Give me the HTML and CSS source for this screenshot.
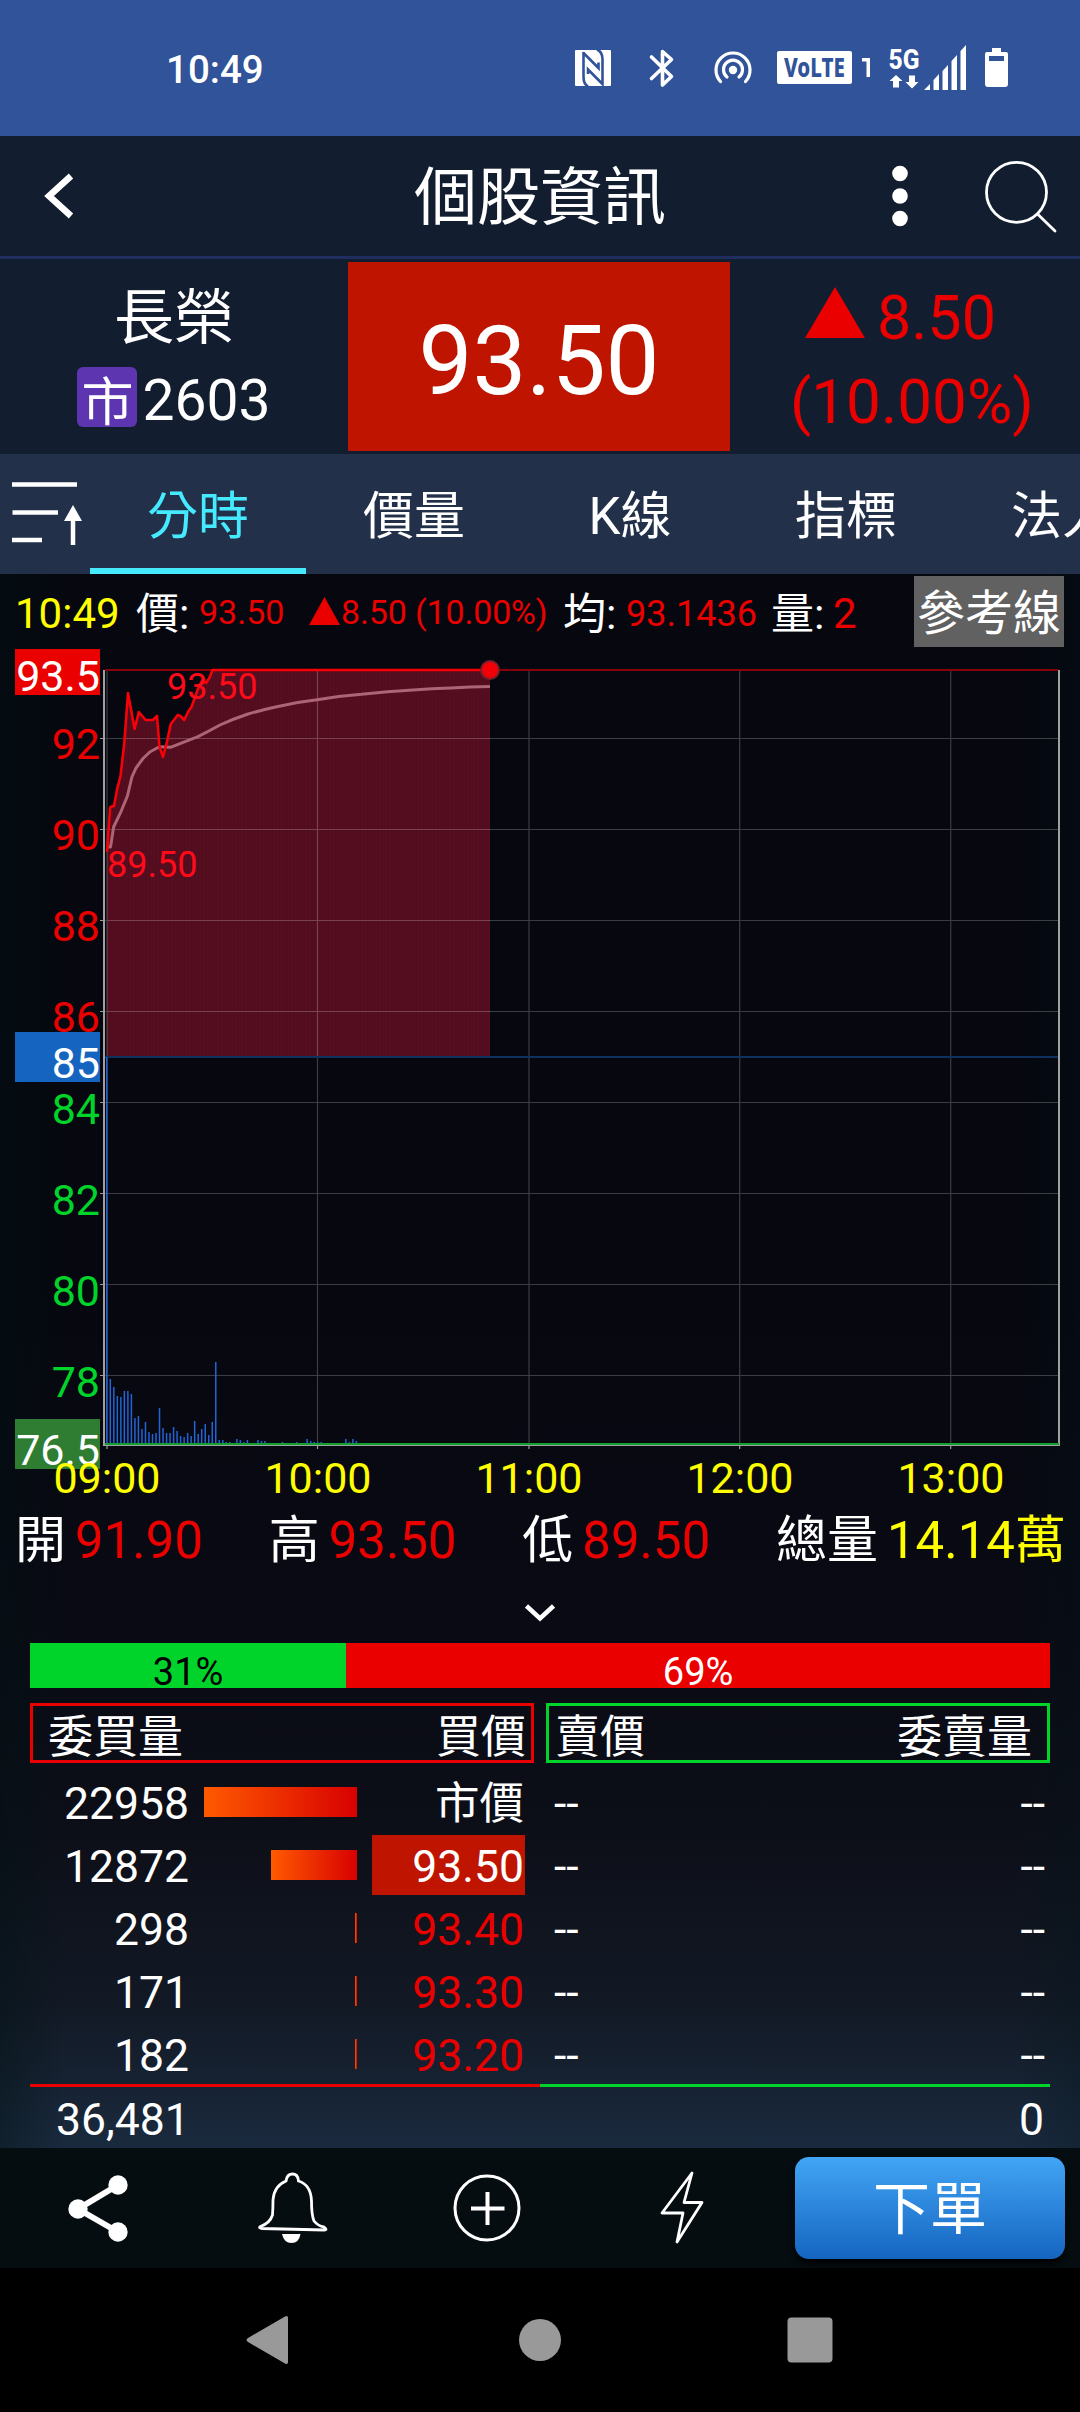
FILE: index.html
```html
<!DOCTYPE html>
<html lang="zh-Hant">
<head>
<meta charset="utf-8">
<title>個股資訊</title>
<link rel="stylesheet" href="styles.css">
</head>
<body>
<div class="statusbar">
  <span class="clock">10:49</span>
  <svg class="status-icons" width="440" height="50" viewBox="570 44 440 50">
    <rect x="575" y="50" width="36" height="36" rx="1" fill="#fff"/>
    <g fill="none" stroke="#305399" stroke-width="2.600">
      <path d="M583.500 52V77Q583.500 84 588 86.500M583 52.500L598.500 68V62.500M597 49.500Q602.500 52 602.500 59V84L588 69.500V74"/>
    </g>
    <path fill="none" stroke="#fff" stroke-width="3.600" stroke-linejoin="round" stroke-linecap="round" d="M651.500 57L671.500 76.500L662.500 85V51.500L671.500 59.500L651.500 78.500"/>
    <circle cx="733" cy="70" r="4.200" fill="#fff"/>
    <path fill="none" stroke="#fff" stroke-width="3.200" stroke-linecap="round" d="M727 77A9.500 9.500 0 1 1 739 77M720.500 81.500A17 17 0 1 1 745.500 81.500"/>
    <rect x="777" y="51" width="75" height="33" rx="2" fill="#fff"/>
    <text class="volte" x="814.500" y="76.500" text-anchor="middle" textLength="61" lengthAdjust="spacingAndGlyphs">VoLTE</text>
    <path fill="#fff" d="M862 58H870V77H866.500V61.500H862Z"/>
    <text class="net" x="888.500" y="69" textLength="31" lengthAdjust="spacingAndGlyphs">5G</text>
    <path fill="#fff" d="M896 75L902.500 81H899V87.500H893V81H889.500ZM912 88.500L918.500 82H915V75.500H909V82H905.500Z"/>
    <path fill="#fff" d="M924 90L930 84V90ZM933.500 80L939 74V90H933.500ZM942.500 71L948 65V90H942.500ZM951.500 61L957 55V90H951.500ZM960.500 51L966 45V90H960.500Z"/>
    <path fill="#fff" fill-rule="evenodd" d="M992 48H1001V52H1006Q1008 52 1008 54V84Q1008 87 1005 87H988Q985 87 985 84V54Q985 52 987 52H992ZM989 56V61H1004V56Z"/>
  </svg>
</div>

<header class="header">
  <svg class="back" width="32" height="48" viewBox="43 171 32 48"><path d="M71 175L49 195L71 215" fill="none" stroke="#fff" stroke-width="6.500"/></svg>
  <h1 class="title">個股資訊</h1>
  <svg class="header-actions" width="172" height="80" viewBox="888 156 172 80">
    <g fill="#fff"><circle cx="900" cy="173.500" r="7.800"/><circle cx="900" cy="196" r="7.800"/><circle cx="900" cy="218.500" r="7.800"/></g>
    <g fill="none" stroke="#fff" stroke-width="2.800" stroke-linecap="round"><circle cx="1016.500" cy="192.300" r="30"/><path d="M1038 214.500L1055 231"/></g>
  </svg>
</header>

<section class="quote">
  <div class="stock">
    <div class="name">長榮</div>
    <div class="code"><span class="badge">市</span><span>2603</span></div>
  </div>
  <div class="price">93.50</div>
  <div class="change">
    <div class="diff"><svg width="60" height="52" viewBox="0 0 60 52"><path fill="#eb0000" d="M30 0L60 51H0Z"/></svg><span>8.50</span></div>
    <div class="pct">(10.00%)</div>
  </div>
</section>

<nav class="tabs">
  <div class="sort"><svg width="72" height="66" viewBox="10 480 72 66"><path d="M12 484.500H77M12.500 512.500H58M12 540H42" stroke="#fff" stroke-width="4.500"/><path d="M73 545V512" stroke="#fff" stroke-width="4.500"/><path d="M73 505L82 521H64Z" fill="#fff"/></svg></div>
  <div class="tab active">分時</div>
  <div class="tab">價量</div>
  <div class="tab">K線</div>
  <div class="tab">指標</div>
  <div class="tab">法人</div>
</nav>

<main class="content">
  <div class="info">
    <span class="t-yellow s42">10:49</span>
    <span>價:</span>
    <span class="t-red s34">93.50</span>
    <span class="t-red s34 move"><svg width="31" height="28" viewBox="0 0 31 28"><path fill="#eb0000" d="M15.500 0L31 28H0Z"/></svg>8.50 (10.00%)</span>
    <span>均:</span>
    <span class="t-red s36">93.1436</span>
    <span>量:</span>
    <span class="t-red s42">2</span>
    <span class="ref">參考線</span>
  </div>

  <svg class="chart" width="1080" height="853" viewBox="0 647 1080 853">
    <defs>
      <pattern id="minute" x="106.800" y="0" width="3.515" height="20" patternUnits="userSpaceOnUse">
        <rect width="3.515" height="20" fill="#560d20"/><rect width="0.800" height="20" fill="#4b0c1c"/>
      </pattern>
    </defs>
    <path fill="url(#minute)" d="M107 1057V852L110.200 807L114 806L117.400 788L120.500 776L124.300 743L128 693L134.600 729L138.800 712L145.700 720H153L157 716L159.400 746L163 757L166.700 743L170.800 724L177.700 715L180.400 716L184.200 720L188 712L191.500 707L198.300 688L202.500 680L206 683L209.400 678L212.500 670H490V1057Z"/>
    <path class="grid" d="M104 738.500H1058M104 829.500H1058M104 920.500H1058M104 1011.500H1058M104 1102.500H1058M104 1193.500H1058M104 1284.500H1058M104 1375.500H1058M107 670V1445M317.500 670V1445M529 670V1445M739.700 670V1445M950.700 670V1445"/>
    <path d="M105 1057H1058" stroke="#0f315f" stroke-width="2"/>
    <path d="M105 670H1058" stroke="#85000a" stroke-width="2"/>
    <path d="M100 738.500H104M100 829.500H104M100 920.500H104M100 1011.500H104M100 1102.500H104M100 1193.500H104M100 1284.500H104M100 1375.500H104M107 1445V1449M317.500 1445V1449M529 1445V1449M739.700 1445V1449M950.700 1445V1449" stroke="#9c9c9c" stroke-width="1.200"/>
    <g transform="translate(106.800 0) scale(3.515 1)">
      <path class="volume" d="M0 1444V1057M1 1444V1379M2 1444V1387M3 1444V1396M4 1444V1397M5 1444V1391M6 1444V1391M7 1444V1394M8 1444V1418M9 1444V1416M10 1444V1429M11 1444V1422M12 1444V1432M13 1444V1434M14 1444V1433M15 1444V1408M16 1444V1428M17 1444V1433M18 1444V1433M19 1444V1427M20 1444V1431M21 1444V1436M22 1444V1437M23 1444V1433M24 1444V1436M25 1444V1421M26 1444V1434M27 1444V1429M28 1444V1424M29 1444V1435M30 1444V1422M31 1444V1362M32 1444V1440M33 1444V1440M34 1444V1442M35 1444V1442M37 1444V1439M38 1444V1440M39 1444V1442M40 1444V1440M43 1444V1440M44 1444V1441M45 1444V1441M50 1444V1442M54 1444V1442M57 1444V1439M58 1444V1441M59 1444V1442M60 1444V1442M61 1444V1442M68 1444V1439M69 1444V1442M70 1444V1439M71 1444V1441"/>
    </g>
    <path d="M104 670V1445M1059 670V1446" stroke="#a0a0a0" stroke-width="2"/>
    <path d="M103 1445.500H1060" stroke="#a0a0a0" stroke-width="1"/>
    <path d="M105 1444H1059" stroke="#12a02e" stroke-width="2"/>
    <path fill="none" stroke="#ab6574" stroke-width="3" stroke-linejoin="round" d="M107 847H110.500L113.600 827L120.500 812.700L127.400 796L131.900 777L136 768L143 758.500L149.800 752L159.400 746.700L170.500 747.300L182.500 742.700L198 736.700Q209 731 220 725Q233 719 248 714Q262 710 275.500 707Q296 702 317 699.700Q339 696 361.600 694.300Q388 691.500 413 690Q450 687.500 490 686.500"/>
    <path fill="none" stroke="#f80008" stroke-width="2.600" stroke-linejoin="round" d="M107 852L110.200 807L114 806L117.400 788L120.500 776L124.300 743L128 693L134.600 729L138.800 712L145.700 720H153L157 716L159.400 746L163 757L166.700 743L170.800 724L177.700 715L180.400 716L184.200 720L188 712L191.500 707L198.300 688L202.500 680L206 683L209.400 678L212.500 670H490"/>
    <circle cx="490" cy="670" r="10" fill="#75202a"/><circle cx="490" cy="670" r="8" fill="#f20008"/>
    <g class="point"><text x="167" y="699">93.50</text><text x="107" y="877">89.50</text></g>
    <g class="axis" text-anchor="end">
      <g fill="#eb0000"><text x="100" y="758.700">92</text><text x="100" y="849.700">90</text><text x="100" y="940.700">88</text><text x="100" y="1031.700">86</text></g>
      <g fill="#00d42a"><text x="100" y="1123.700">84</text><text x="100" y="1214.700">82</text><text x="100" y="1305.700">80</text><text x="100" y="1396.700">78</text></g>
      <rect x="15" y="649" width="85" height="46" fill="#eb0000"/>
      <rect x="15" y="1032" width="85" height="50" fill="#1565c0"/>
      <rect x="15" y="1419" width="85" height="50" fill="#2e7d32"/>
      <g fill="#fff"><text x="100" y="691">93.5</text><text x="100" y="1078">85</text><text x="100" y="1465">76.5</text></g>
    </g>
    <g class="axis" fill="#ff0" text-anchor="middle"><text x="107" y="1492.700">09:00</text><text x="318" y="1492.700">10:00</text><text x="529" y="1492.700">11:00</text><text x="740" y="1492.700">12:00</text><text x="951" y="1492.700">13:00</text></g>
  </svg>

  <div class="summary">
    <div><span>開</span><b class="t-red">91.90</b></div>
    <div><span>高</span><b class="t-red">93.50</b></div>
    <div><span>低</span><b class="t-red">89.50</b></div>
    <div><span>總量</span><b class="t-yellow">14.14萬</b></div>
  </div>
  <div class="chevron"><svg width="30" height="20" viewBox="0 0 30 20"><path d="M1.500 3L15 15.500L28.500 3" fill="none" stroke="#fff" stroke-width="4.500"/></svg></div>

  <div class="ratio"><div class="buy" style="width:31%">31%</div><div class="sell" style="width:69%">69%</div></div>

  <div class="book">
    <div class="side bid">
      <div class="head"><span>委買量</span><span>買價</span></div>
      <div class="row"><span class="qty">22958</span><span class="track"><i class="bar" style="width:153px"></i></span><span class="px">市價</span></div>
      <div class="row"><span class="qty">12872</span><span class="track"><i class="bar" style="width:86px"></i></span><span class="px limit">93.50</span></div>
      <div class="row"><span class="qty">298</span><span class="track"><i class="bar" style="width:2px"></i></span><span class="px up">93.40</span></div>
      <div class="row"><span class="qty">171</span><span class="track"><i class="bar" style="width:2px"></i></span><span class="px up">93.30</span></div>
      <div class="row"><span class="qty">182</span><span class="track"><i class="bar" style="width:2px"></i></span><span class="px up">93.20</span></div>
    </div>
    <div class="side ask">
      <div class="head"><span>賣價</span><span>委賣量</span></div>
      <div class="row"><span>--</span><span>--</span></div>
      <div class="row"><span>--</span><span>--</span></div>
      <div class="row"><span>--</span><span>--</span></div>
      <div class="row"><span>--</span><span>--</span></div>
      <div class="row"><span>--</span><span>--</span></div>
    </div>
  </div>
  <div class="total"><span>36,481</span><span>0</span></div>
</main>

<div class="toolbar">
  <div class="tool"><svg width="70" height="76" viewBox="62 2170 70 76"><path d="M117 2185L77 2209L117 2232" fill="none" stroke="#fff" stroke-width="6"/><g fill="#fff"><circle cx="77" cy="2209" r="9.700"/><circle cx="117" cy="2185" r="9.700"/><circle cx="117" cy="2232" r="9.700"/></g></svg></div>
  <div class="tool"><svg width="72" height="76" viewBox="257 2170 72 76"><path d="M292.500 2174Q298 2174 298.500 2181Q311 2185 311.500 2201Q311.500 2215 314 2221Q318 2226 324 2227Q328 2230 324 2230L262 2228.500Q258 2228 260.500 2226.500Q270 2223 272.500 2215Q273 2208 273 2200Q274 2186 286 2181Q287 2174 292.500 2174Z" fill="none" stroke="#fff" stroke-width="2.800"/><path d="M282 2234H300.500Q299 2243 291.500 2243Q284 2243 282 2234Z" fill="#fff"/></svg></div>
  <div class="tool"><svg width="72" height="76" viewBox="452 2170 72 76"><g fill="none" stroke="#fff"><circle cx="487" cy="2208" r="32" stroke-width="3"/><path d="M487.500 2192V2225M471 2208.500H504.500" stroke-width="4"/></g></svg></div>
  <div class="tool"><svg width="72" height="76" viewBox="647 2170 72 76"><path d="M692 2173L662 2213H683L677 2242L702 2202.500H684Z" fill="none" stroke="#fff" stroke-width="2.800" stroke-linejoin="round"/></svg></div>
  <div class="order">下單</div>
</div>

<div class="navbar">
  <svg width="1080" height="144" viewBox="0 0 1080 144" fill="#999"><path d="M285 48.500Q288 47 288 50V94Q288 97 285 95.500L248 74Q245 72 248 70Z"/><circle cx="540" cy="72" r="21"/><rect x="787.500" y="49.500" width="45" height="45" rx="4"/></svg>
</div>
</body>
</html>
```
FILE: styles.css
```css
* { box-sizing: border-box; }
body {
  margin: 0;
  width: 1080px;
  height: 2412px;
  overflow: hidden;
  display: flex;
  flex-direction: column;
  background: #000;
  color: #fff;
  font-family: Roboto, "Noto Sans CJK TC", sans-serif;
}
svg { display: block; flex: none; }

.statusbar { height: 136px; background: #305399; display: flex; padding: 44px 70px 0 166px; justify-content: space-between; }
.clock { font-size: 38.500px; font-weight: 500; line-height: 52px; }
.volte { font: 800 27px "Noto Sans", sans-serif; fill: #305399; }
.net { font: 800 27px Roboto, sans-serif; fill: #fff; }

.header { height: 123px; background: #121d2f; border-bottom: 3px solid #1f2e5e; display: grid; grid-template-columns: 1fr auto 1fr; align-items: center; padding: 0 20px; }
.back { margin-left: 23px; }
.title { margin: 0; font-size: 63px; font-weight: 400; line-height: 80px; padding-top: 3px; }
.header-actions { justify-self: end; }

.quote { height: 195px; background: #121d2f; display: grid; grid-template-columns: 348px 382px 350px; grid-template-rows: 195px; }
.stock { padding-top: 20px; text-align: center; }
.name { font-size: 60px; line-height: 80px; }
.code { display: flex; justify-content: center; gap: 5px; font-size: 57px; line-height: 84px; }
.badge { width: 60px; height: 60px; margin-top: 8px; border-radius: 6px; background: #5e35b1; font-size: 52px; line-height: 74px; }
.price { height: 189px; margin: 3px 0; background: #bf1500; font-size: 96px; text-align: center; line-height: 198px; }
.change { color: #eb0000; font-size: 61px; line-height: 83px; padding-top: 18px; }
.diff { display: flex; align-items: center; gap: 12px; padding-left: 75px; }
.diff svg { margin-top: -11px; }
.pct { padding-left: 60px; font-size: 62px; }

.tabs { height: 120px; background: #22304a; display: flex; overflow: hidden; }
.sort { width: 90px; flex: none; padding: 26px 0 0 10px; }
.tab { width: 216px; flex: none; text-align: center; font-size: 51px; line-height: 125px; border-bottom: 6px solid transparent; }
.active { color: #45eaff; border-color: #45eaff; }

.content {
  height: 1574px;
  background:
    linear-gradient(90deg, rgba(0, 18, 20, .4), rgba(0, 18, 20, 0) 6%, rgba(0, 18, 20, 0) 94%, rgba(0, 22, 26, .25)),
    linear-gradient(#06070f 0, #06070f 45%, #090a13 66%, #0d0f18 80%, #121925 91%, #1a2a3e 100%);
}
.info { height: 73px; display: grid; grid-template-columns: 121px 63px 110px 254px 63px 145px 62px 81px 150px; padding: 2px 0 0 15px; font-size: 43px; white-space: nowrap; }
.info > span { padding-top: 12px; line-height: 52px; height: 64px; }
.info > .s34 { font-size: 34px; padding-top: 10px; }
.info > .s36 { font-size: 36px; }
.info > .s42 { font-size: 42px; }
.move { display: flex; gap: 1px; letter-spacing: -.15px; }
.move svg { margin-top: 11px; }
.info > .ref { width: 150px; height: 71px; background: #616161; font-size: 48px; line-height: 75px; padding: 0; text-align: center; }
.t-yellow { color: #ff0; }
.t-red { color: #eb0000; }

.grid { stroke: #fff; stroke-opacity: .22; stroke-width: 1.200; fill: none; }
.volume { stroke: #2364d6; stroke-width: 1.500; vector-effect: non-scaling-stroke; }
.point { font-size: 36px; fill: #ff0a18; }
.axis { font-size: 43px; }

.summary { height: 80px; display: flex; justify-content: space-between; padding: 0 14px 0 15px; font-size: 51px; line-height: 82px; }
.summary div { display: flex; gap: 9px; }
.summary b { font-weight: 400; }
.chevron { height: 63px; display: flex; justify-content: center; padding-top: 23px; }

.ratio { height: 45px; margin: 0 30px; display: flex; text-align: center; font-size: 38px; line-height: 59px; }
.ratio > div { height: 45px; }
.buy { background: #00d42a; color: #000; }
.sell { background: #eb0000; }

.book { display: flex; margin: 15px 30px 0; font-size: 44.500px; }
.side { width: 510px; height: 384px; }
.bid { border-bottom: 3px solid #eb0000; }
.ask { border-bottom: 3px solid #00d42a; }
.head { width: 504px; height: 60px; display: flex; justify-content: space-between; font-size: 45px; line-height: 64px; margin-bottom: 9px; }
.bid .head { border: 3px solid #eb0000; padding: 0 5px 0 15px; }
.ask .head { border: 3px solid #00d42a; padding: 0 15px 0 6px; margin-left: 6px; }
.row { height: 63px; display: flex; line-height: 65px; }
.qty { width: 159px; text-align: right; }
.track { width: 168px; height: 30px; margin-top: 15px; display: flex; justify-content: flex-end; }
.bar { background: linear-gradient(90deg, #ff5a00, #d80000); }
.px { width: 153px; height: 60px; margin-left: 15px; text-align: right; padding-right: 1px; }
.limit { background: #bf1500; }
.up { color: #eb0000; }
.ask .row { justify-content: space-between; padding: 0 5px 0 14px; }
.total { display: flex; justify-content: space-between; padding: 0 36px 0 56px; font-size: 44.500px; line-height: 66px; height: 61px; }

.toolbar { height: 120px; background: #050d10; display: flex; }
.tool { width: 195px; display: flex; justify-content: center; padding-top: 22px; }
.order { width: 270px; height: 102px; margin: 9px 0 0 15px; border-radius: 14px; background: linear-gradient(#42a5f5, #1565c0); box-shadow: 0 4px 6px #000; text-align: center; font-size: 57px; line-height: 105px; }
.navbar { height: 144px; background: #000; }
```
